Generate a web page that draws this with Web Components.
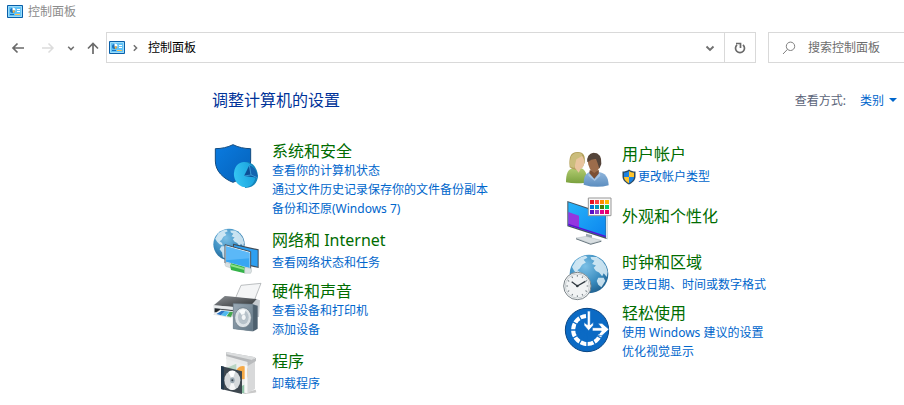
<!DOCTYPE html>
<html lang="zh-CN">
<head>
<meta charset="UTF-8">
<title>控制面板</title>
<style>
	body {
		margin: 0;
		background: #fff;
		font-family: "Noto Sans", "Noto Sans CJK SC", sans-serif;
		font-size: 12px;
		line-height: 19px;
		color: #000;
	}
</style>
</head>
<body>
<control-window>
	<title-bar slot="title">控制面板</title-bar>
	<address-bar slot="nav" location="控制面板"></address-bar>
	<search-box slot="nav" hint="搜索控制面板"></search-box>
	<panel-header slot="header" label="查看方式:" value="类别">调整计算机的设置</panel-header>
	<category-list>
		<category-item icon="security" name="系统和安全" size="large">
			<a href="#status">查看你的计算机状态</a>
			<a href="#history">通过文件历史记录保存你的文件备份副本</a>
			<a href="#backup">备份和还原(Windows 7)</a>
		</category-item>
		<category-item icon="network" name="网络和 Internet">
			<a href="#network">查看网络状态和任务</a>
		</category-item>
		<category-item icon="hardware" name="硬件和声音" size="large">
			<a href="#printers">查看设备和打印机</a>
			<a href="#devices">添加设备</a>
		</category-item>
		<category-item icon="programs" name="程序">
			<a href="#uninstall">卸载程序</a>
		</category-item>
	</category-list>
	<category-list>
		<category-item icon="users" name="用户帐户">
			<a href="#account"><panel-icon name="uac"></panel-icon>更改帐户类型</a>
		</category-item>
		<category-item icon="appearance" name="外观和个性化" size="bare"></category-item>
		<category-item icon="clock" name="时钟和区域">
			<a href="#formats">更改日期、时间或数字格式</a>
		</category-item>
		<category-item icon="ease" name="轻松使用" size="large">
			<a href="#suggest">使用 Windows 建议的设置</a>
			<a href="#visual">优化视觉显示</a>
		</category-item>
	</category-list>
</control-window>

<script>
const globe = (cx, cy, r, id) => `
	<radialGradient id="${id}" cx=".4" cy=".3" r=".75"><stop offset="0" stop-color="#7cc0e6"/><stop offset=".6" stop-color="#3b8dc0"/><stop offset="1" stop-color="#1f5e8c"/></radialGradient>
	<g transform="translate(${cx} ${cy}) scale(${r / 50})">
		<circle r="50" fill="url(#${id})"/>
		<path fill="#dff0f8" opacity=".85" d="M-44 -18 L-34 -35 -20 -44 -8 -47 -4 -42 -14 -37 -8 -30 -18 -24 -24 -14 -30 -10 -22 -4 -20 4 -30 0 -38 -8ZM-24 6 L-10 6 2 16 -2 28 -10 36 -14 46 -20 40 -22 26 -30 16ZM4 -44 L20 -44 34 -34 44 -20 48 -6 46 8 38 -2 34 6 26 -4 18 -8 12 -16 18 -22 8 -26 14 -34 6 -38ZM24 10 L38 10 42 18 32 34 24 28 20 18Z"/>
	</g>`;

const clockTicks = [0, 30, 60, 90, 120, 150, 180, 210, 240, 270, 300, 330]
	.map(a => `<path d="M0 -33V-28" transform="rotate(${a})"/>`).join('');

const swatches = ['#e81123', '#ff4343', '#ff8c00', '#ffb900', '#0078d7', '#0099bc', '#498205', '#00cc6a', '#5a0fc8', '#8e3fc6', '#e3008c', '#ea005e']
	.map((c, i) => `<rect x="${90 + i % 4 * 15}" y="${24 + Math.floor(i / 4) * 15}" width="12" height="12" fill="${c}"/>`).join('');

const icons = {
	panel: ['0 0 16 13', `
		<path d="M.5 .5H15.5V12.5H.5Z" fill="#62c3f6" stroke="#0a5fa8"/>
		<path d="M1.5 1.5H14.5V11.5H1.5Z" fill="none" stroke="#9bdcfb"/>
		<circle cx="5.5" cy="5.500" r="2.500" fill="#1672c0"/><path d="M5.500 5.500V2.500A3 3 0 0 1 8.500 5.500Z" fill="#fff"/><path d="M5.500 5.500H8A2.500 2.500 0 0 1 6 8Z" fill="#ffb638"/>
		<path d="M10 4.500H13M10 6.500H13" stroke="#fff"/><path d="M3 9.500H7" stroke="#1672c0"/><path d="M8 9.500H13" stroke="#ffc252"/>`],
	back: ['0 0 14 14', '<path d="M13 7H2M6.500 2.500L2 7L6.500 11.500" fill="none" stroke="#6a6a6a" stroke-width="1.700"/>'],
	forward: ['0 0 14 14', '<path d="M1 7H12M7.500 2.500L12 7L7.500 11.500" fill="none" stroke="#dcdcdc" stroke-width="1.500"/>'],
	up: ['0 0 14 14', '<path d="M7 13V2.500M2 7.500L7 2.500L12 7.500" fill="none" stroke="#6a6a6a" stroke-width="1.700"/>'],
	chevron: ['0 0 10 10', '<path d="M1.500 3.500L5 7L8.500 3.500" fill="none" stroke="#707070" stroke-width="1.900"/>'],
	refresh: ['0 0 14 14', '<path d="M10 3.800A4.500 4.500 0 1 1 4 3.800M3 2.500H7.500V7" fill="none" stroke="#6a6a6a" stroke-width="1.700"/>'],
	search: ['0 0 14 14', '<circle cx="8.500" cy="5.300" r="4.200" fill="none" stroke="#808080"/><path d="M5.500 8.300L1 13" stroke="#808080"/>'],
	uac: ['0 0 14 16', `
		<path d="M7 .5C5 2 3 2.500 .5 2.600V7.500C.5 11.500 4 14 7 15.500C10 14 13.500 11.500 13.500 7.500V2.600C11 2.500 9 2 7 .5Z" fill="#2b4a63"/>
		<path d="M7 2C5.500 3 4 3.500 2 3.700V8H7Z" fill="#1a82e2"/><path d="M7 2C8.500 3 10 3.500 12 3.700V8H7Z" fill="#ffc52b"/>
		<path d="M2 8H7V14.200C4 12.700 2 10.700 2 8Z" fill="#ffc52b"/><path d="M12 8H7V14.200C10 12.700 12 10.700 12 8Z" fill="#1a82e2"/>`],
	security: ['21 24 144 144', `
		<linearGradient id="s" x2="1" y2="1"><stop stop-color="#0a7be0"/><stop offset="1" stop-color="#0561b8"/></linearGradient>
		<linearGradient id="p" x2="1"><stop stop-color="#35c5f2"/><stop offset="1" stop-color="#18a0dd"/></linearGradient>
		<path d="M84 29C68 37 50 41 31 41V78C31 108 55 131 84 142C113 131 137 108 137 78V41C118 41 100 37 84 29Z" fill="url(#s)" stroke="#124b80" stroke-width="3"/>
		<path d="M118 82C136 78 156 92 159 122C158 142 146 158 120 159Z" fill="#1585ba"/>
		<ellipse cx="119" cy="119" rx="32" ry="38" transform="rotate(-12 119 119)" fill="url(#p)"/>
		<path d="M133 91L117 123L157 128C157 112 148 98 133 91Z" fill="#0c4f96"/><path d="M133 91L138 120L157 128C157 111 148 98 133 91Z" fill="#1464af"/>
		<path d="M133 91L138 120L157 128M138 120L117 123" fill="none" stroke="#4eb5ec" stroke-width="2"/>`],
	network: ['21 24 144 144', `
		${globe(72, 70, 47, 'ng')}
		<path d="M84 68L161 85V141L84 124Z" fill="#3f4b57"/><path d="M87 72L158 88V137L87 121Z" fill="#2d9ff0"/>
		<path d="M60 71L137 92V146L60 126Z" fill="#eef5fa"/><path d="M60 71L137 92V146L60 126Z" fill="none" stroke="#45525e" stroke-width="3"/><path d="M63 76L134 95V141L63 122Z" fill="#38a6f2"/><path d="M63 76L134 95V112L63 118Z" fill="#73c5fb" opacity=".6"/>
		<path d="M62 124L80 128V142L62 136Q57 130 62 124Z" fill="#d9e0e2" stroke="#9ba6a8"/><path d="M78 127L119 138V157L78 147Q73 136 78 127Z" fill="#35b34a"/><path d="M78 130L118 141V147L77 136Z" fill="#8de288"/><path d="M119 139L137 142Q143 150 137 157L119 157Z" fill="#dbe2e4" stroke="#9ba6a8"/>`],
	hardware: ['21 18 144 144', `
		<linearGradient id="hp" x2="1" y2="1"><stop stop-color="#8d9094"/><stop offset="1" stop-color="#292d30"/></linearGradient>
		<linearGradient id="hs" x2="1" y2="1"><stop stop-color="#9baab6"/><stop offset="1" stop-color="#627685"/></linearGradient>
		<path d="M58 58L148 64L165 70L162 120L100 122L27 108L26 84Z" fill="#c6cbd0"/>
		<path d="M108 25L168 19L148 70L92 62Z" fill="#f4f5f6" stroke="#9da2a5" stroke-width="2"/>
		<path d="M27 85L60 57L155 66L130 94Z" fill="url(#hp)"/><path d="M27 85L130 94L128 102L26 92Z" fill="#e8ebed"/>
		<path d="M29 94L84 100V112L29 105Z" fill="#22282d"/>
		<path d="M46 98L86 103L78 122L26 112Z" fill="#f8fbfc" stroke="#bbb"/><path d="M50 101L61 102L48 115L34 111Z" fill="#2b75c6"/><path d="M61 102L74 104L62 118L48 115Z" fill="#4fb9ee"/><path d="M74 104L84 105L78 120L65 118Z" fill="#43a84e"/>
		<path d="M85 80L143 82L158 86V155L145 163L85 155Z" fill="#4e606e"/><path d="M85 80L143 82V162L85 155Z" fill="url(#hs)" stroke="#778996" stroke-width="2"/>
		<ellipse cx="114" cy="122" rx="25" ry="30" fill="#dce2e6" stroke="#5f6f7b" stroke-width="2"/><ellipse cx="115" cy="121" rx="16" ry="21" fill="#b7c2ca"/><path d="M115 121L102 102A20 24 0 0 1 122 99Z" fill="#f9fbfc"/><ellipse cx="116" cy="121" rx="7" ry="9" fill="#f2f5f7" stroke="#8796a1"/>`],
	programs: ['21 21 144 144', `
		<path d="M112 150L152 140L154 148L120 153Z" fill="#c9c9c9"/>
		<path d="M64 40L130 58V150L64 132Z" fill="#eceeed"/><path d="M64 75L94 62V132H64Z" fill="#b8d5c3"/><circle cx="113" cy="89" r="20" fill="#f6a946"/><path d="M105 150V131L118 125V151Z" fill="#8fc4a6"/>
		<path d="M127 61L150 47V138L127 151Z" fill="#d8d9da"/><path d="M127 61V151L119 149V65Z" fill="#f7f7f7"/>
		<path d="M63 27L151 43L128 64L64 45Z" fill="#b5b7b9"/><path d="M63 27L151 43L141 51L65 34Z" fill="#dbddde"/><path d="M63 39L128 57V68L63 48Z" fill="#e8e9e9"/><path d="M128 58L153 44V54L128 69Z" fill="#b9bbbd"/>
		<path d="M48 69L111 85V153L48 138Z" fill="#3e4850"/><path d="M48 69L57 71V140L48 138Z" fill="#23394c"/>
		<ellipse cx="82" cy="112" rx="24" ry="29" fill="#d5d9db"/><path d="M82 112L70 87A24 29 0 0 1 91 85Z" fill="#fff"/><path d="M82 112L92 138A24 29 0 0 1 72 138Z" fill="#f5f6f6"/><ellipse cx="82" cy="112" rx="7" ry="9" fill="#9caab3"/><circle cx="82" cy="112" r="3" fill="#3e4850"/>`],
	users: ['6 9 144 144', `
		<linearGradient id="ua" y2="1" x2="0"><stop stop-color="#b3cc72"/><stop offset="1" stop-color="#7aa13e"/></linearGradient>
		<linearGradient id="ub" y2="1" x2="0"><stop stop-color="#91b6dc"/><stop offset="1" stop-color="#5b8dbf"/></linearGradient>
		<path d="M18 127C18 104 22 88 39 84L62 84C72 87 79 96 80 110L78 128Q45 132 18 127Z" fill="url(#ua)"/>
		<path d="M29 82C26 50 32 36 52 36C71 35 77 48 74 68L68 82L50 90Q38 90 29 82Z" fill="#b3a05c"/>
		<path d="M47 55L65 46C77 59 75 80 62 87L56 98L45 84Q39 65 47 55Z" fill="#e9c49e"/><path d="M33 50Q42 36 59 39Q69 42 65 49L49 58L43 84L31 80Q27 64 33 50Z" fill="#cbbd7c"/>
		<path d="M71 134C71 112 75 101 89 96L116 96C135 99 145 109 146 136Q109 146 71 134Z" fill="url(#ub)"/>
		<path d="M89 91H117L116 101L103 116L88 100Z" fill="#7c5035"/><path d="M83 63Q83 42 101 39Q123 40 122 67Q120 91 103 99Q86 91 83 63Z" fill="#9c6c4b"/><path d="M82 66Q79 42 101 38Q126 39 124 72L118 86Q113 68 108 57Q94 56 85 65Z" fill="#54443a"/>
		<path d="M86 99L103 118L119 99L121 107L104 123L85 107Z" fill="#a5c3e2"/>`],
	appearance: ['6 15 144 144', `
		<linearGradient id="am" x2="1" y2="1"><stop stop-color="#27b4fa"/><stop offset="1" stop-color="#0b84ee"/></linearGradient>
		<path d="M78 125L96 130V142L78 138Z" fill="#9ca7ae"/><path d="M48 138L78 133L124 145L92 155Z" fill="#d9dfe2" stroke="#9aa5ab"/><path d="M48 139L92 155L124 146V149L92 158L48 142Z" fill="#65747d"/>
		<path d="M22 27L142 67V142L22 103Z" fill="#46545f"/><path d="M25 31L137 69V136L25 100Z" fill="url(#am)"/>
		<path d="M25 60L57 71V110L25 100Z" fill="#9436df"/><path d="M25 95L137 131V136L25 100Z" fill="#5a11d0"/><path d="M138 68L143 69V142L138 139Z" fill="#dce4e8"/>
		<path d="M85 18H153V71H85Z" fill="#f8f8f8" stroke="#979797" stroke-width="3"/>${swatches}`],
	clock: ['6 9 144 144', `
		${globe(87, 78, 58, 'cg')}
		<circle cx="52" cy="114" r="41" fill="#f6f7f7" stroke="#7b8489" stroke-width="3"/><circle cx="52" cy="114" r="36" fill="#f1f3f4" stroke="#c9cfd2" stroke-width="3"/>
		<g transform="translate(52 114)" stroke="#727c82" stroke-width="3">${clockTicks}</g>
		<path d="M35 101L52 114L76 100" fill="none" stroke="#303940" stroke-width="4"/><circle cx="52" cy="114" r="4" fill="#303940"/>`],
	ease: ['6 15 144 144', `
		<circle cx="81" cy="90" r="65" fill="#0b6ac4" stroke="#0a4582" stroke-width="3"/>
		<path d="M78 48A42 42 0 1 0 121 104" fill="none" stroke="#fff" stroke-width="12"/>
		<path d="M81 90L51 38M81 90L29 60M81 90L21 90M81 90L29 120M81 90L51 142M81 90V150M81 90L111 142M81 90L133 120" stroke="#0b6ac4" stroke-width="4"/>
		<path d="M82 33H91V74L100 67V76L86 92L72 76V67L82 74Z" fill="#fff" stroke="#0b6ac4" stroke-width="2"/>
		<path d="M97 83H124L114 70H126L147 88L126 107H114L124 93H97Z" fill="#fff" stroke="#0b6ac4" stroke-width="2"/>`]
};

class PanelElement extends HTMLElement {
	connectedCallback() {
		if(this.shadowRoot) return;
		this.attachShadow({ mode: 'open' });
		const template = document.createElement('template');
		template.innerHTML = `<style>${this.getStyles()}</style>${this.getTemplate()}`;
		this.shadowRoot.appendChild(template.content.cloneNode(true));
	}
	attr(name) {
		return this.getAttribute(name) || '';
	}
}

class PanelIcon extends PanelElement {
	getTemplate() {
		const [box, shapes] = icons[this.attr('name')];
		return `<svg viewBox="${box}" aria-hidden="true">${shapes}</svg>`;
	}
	getStyles() {
		return `
			:host { display: inline-block; flex: none; width: 14px; height: 14px; }
			:host([name="panel"]) { width: 16px; height: 13px; }
			:host([name="chevron"]) { width: 10px; height: 10px; }
			:host([name="uac"]) { height: 16px; }
			svg { display: block; width: 100%; height: 100%; overflow: visible; }
		`;
	}
}

class ControlWindow extends PanelElement {
	getTemplate() {
		return `
			<slot name="title"></slot>
			<nav><slot name="nav"></slot></nav>
			<main>
				<slot name="header"></slot>
				<div class="columns"><slot></slot></div>
			</main>
		`;
	}
	getStyles() {
		return `
			:host { display: block; }
			nav { display: flex; gap: 12px; margin-top: 9px; }
			main { padding: 27px 0 0 212px; }
			.columns { display: grid; grid-template-columns: 1fr 1fr; gap: 8px; margin-top: 31px; }
		`;
	}
}

class TitleBar extends PanelElement {
	getTemplate() {
		return `<panel-icon name="panel"></panel-icon><span><slot></slot></span>`;
	}
	getStyles() {
		return `
			:host { display: flex; align-items: center; gap: 5px; height: 23px; padding-left: 7px; color: #8c8c8c; }
		`;
	}
}

class AddressBar extends PanelElement {
	getTemplate() {
		return `
			<div class="arrows">
				<button aria-label="后退"><panel-icon name="back"></panel-icon></button>
				<button aria-label="前进" disabled><panel-icon name="forward"></panel-icon></button>
				<button class="recent" aria-label="最近"><panel-icon name="chevron"></panel-icon></button>
				<button aria-label="向上"><panel-icon name="up"></panel-icon></button>
			</div>
			<div class="address">
				<panel-icon name="panel"></panel-icon>
				<panel-icon class="next" name="chevron"></panel-icon>
				<button class="location">${this.attr('location')}</button>
				<button class="drop" aria-label="历史"><panel-icon name="chevron"></panel-icon></button>
				<button class="refresh" aria-label="刷新"><panel-icon name="refresh"></panel-icon></button>
			</div>
		`;
	}
	getStyles() {
		return `
			:host { display: flex; flex: 1; min-width: 0; }
			button { display: flex; align-items: center; justify-content: center; padding: 0; border: 0; background: none; font: inherit; color: inherit; }
			.arrows { display: flex; align-items: center; gap: 16px; padding: 0 6px 0 11px; }
			.arrows .recent { width: 8px; margin: 0 -5px 0 -4px; }
			.arrows .recent panel-icon { width: 8px; height: 8px; }
			.address { display: flex; flex: 1; align-items: center; height: 29px; padding-left: 2px; border: 1px solid #d9d9d9; }
			.next { width: 8px; height: 8px; margin: 0 9px 0 6px; transform: rotate(-90deg); }
			.drop { width: 28px; height: 100%; margin-left: auto; }
			.refresh { width: 31px; height: 100%; border-left: 1px solid #d9d9d9; }
		`;
	}
}

class SearchBox extends PanelElement {
	getTemplate() {
		return `
			<label for="query"><panel-icon name="search"></panel-icon></label>
			<input id="query" type="text" aria-label="${this.attr('hint')}" placeholder="${this.attr('hint')}">
		`;
	}
	getStyles() {
		return `
			:host { display: flex; align-items: center; gap: 12px; box-sizing: border-box; width: 136px; padding-left: 13px; border: 1px solid #d9d9d9; border-right: 0; }
			label { display: flex; }
			input { flex: 1; min-width: 0; padding: 0; border: 0; outline: 0; background: none; font: inherit; }
			input::placeholder { color: #6d6d6d; opacity: 1; }
		`;
	}
}

class PanelHeader extends PanelElement {
	getTemplate() {
		return `
			<h1><slot></slot></h1>
			<label for="view">${this.attr('label')}</label>
			<span class="view">
				<select id="view"><option>${this.attr('value')}</option></select>
				<i></i>
			</span>
		`;
	}
	getStyles() {
		return `
			:host { display: flex; align-items: center; padding-right: 7px; }
			h1 { flex: 1; margin: 0; font-size: 16px; font-weight: 400; line-height: 20px; color: #003399; }
			label { margin-right: 14px; color: #5a6378; }
			.view { display: flex; align-items: center; gap: 4px; }
			select { appearance: none; padding: 0; border: 0; background: none; font: inherit; color: #0066cc; }
			i { border: 4px solid transparent; border-top-color: #0066cc; border-bottom: 0; }
		`;
	}
}

class CategoryList extends PanelElement {
	getTemplate() {
		return `<slot></slot>`;
	}
	getStyles() {
		return `
			:host { display: block; min-width: 0; }
		`;
	}
}

class CategoryItem extends PanelElement {
	getTemplate() {
		return `
			<panel-icon name="${this.attr('icon')}"></panel-icon>
			<div class="text">
				<h2><a href="#${this.attr('icon')}">${this.attr('name')}</a></h2>
				<div class="links"><slot></slot></div>
			</div>
		`;
	}
	getStyles() {
		return `
			:host { display: flex; gap: 12px; min-height: 50px; margin-bottom: 4px; }
			:host([size="large"]) { margin-bottom: 9px; }
			panel-icon { width: 48px; height: 48px; margin-top: 2px; }
			.text { padding-top: 3px; }
			:host([size="large"]) .text { padding-top: 0; }
			:host([size="bare"]) .text { padding-top: 11px; }
			h2 { margin: 0 0 3px; font-size: 16px; font-weight: 400; line-height: 20px; }
			:host([size="large"]) h2 { margin-bottom: 0; }
			h2 a { color: #006c00; text-decoration: none; }
			.links { display: flex; flex-direction: column; align-items: flex-start; }
			::slotted(a) { display: flex; align-items: center; gap: 2px; color: #0066cc; text-decoration: none; }
		`;
	}
}

customElements.define('panel-icon', PanelIcon);
customElements.define('control-window', ControlWindow);
customElements.define('title-bar', TitleBar);
customElements.define('address-bar', AddressBar);
customElements.define('search-box', SearchBox);
customElements.define('panel-header', PanelHeader);
customElements.define('category-list', CategoryList);
customElements.define('category-item', CategoryItem);
</script>
</body>
</html>
